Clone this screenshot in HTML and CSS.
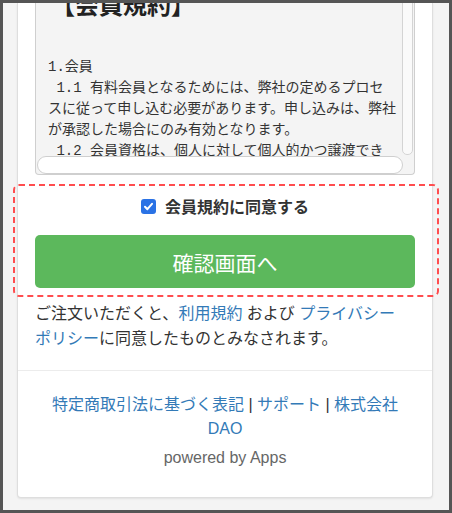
FILE: index.html
```html
<!DOCTYPE html>
<html lang="ja">
<head>
    <meta charset="UTF-8">
    <meta name="viewport" content="width=device-width, initial-scale=1.0">
    <title>会員規約</title>
    <link rel="stylesheet" href="styles.css">
</head>
<body>
    <div class="frame">
        <div class="card">
            <!-- terms box, scrolled to the top -->
            <div class="terms-box">
                <div class="terms-body">
                    <div class="terms-title">【会員規約】</div>
                    <div class="terms-text">1.会員
 1.1 有料会員となるためには、弊社の定めるプロセ
スに従って申し込む必要があります。申し込みは、弊社
が承認した場合にのみ有効となります。
 1.2 会員資格は、個人に対して個人的かつ譲渡でき</div>
                </div>
                <span class="scroll-v"></span>
                <span class="scroll-h"></span>
            </div>

            <div class="agree-area">
                <label class="agree">
                    <span class="check">
                        <svg width="11" height="11" viewBox="0 0 11 11"><path d="M2 5.8 L4.4 8.2 L9 2.8" fill="none" stroke="#fff" stroke-width="2" stroke-linecap="round" stroke-linejoin="round"/></svg>
                    </span>
                    会員規約に同意する
                </label>
                <button class="btn-confirm">確認画面へ</button>
            </div>

            <p class="notice">ご注文いただくと、<a href="#">利用規約</a> および <a href="#">プライバシーポリシー</a>に同意したものとみなされます。</p>

            <div class="footer">
                <div class="footer-links">
                    <a href="#">特定商取引法に基づく表記</a> | <a href="#">サポート</a> | <a href="#">株式会社DAO</a>
                </div>
                <div class="powered">powered by Apps</div>
            </div>
        </div>
    </div>
</body>
</html>
```

FILE: styles.css
```css
/* Global styles */
body {
    margin: 0;
    font-family: 'Liberation Sans', 'Noto Sans CJK JP', sans-serif;
    color: #333;
}
.frame {
    height: 513px;
    box-sizing: border-box;
    border: 3px solid #555;
    background: #f4f4f4;
    padding: 0 14px;
    overflow: hidden;
}
.card {
    width: 416px;
    box-sizing: border-box;
    background: #fff;
    border: 1px solid #dedede;
    border-top: none;
    border-radius: 0 0 4px 4px;
    padding: 0 17px 27px;
    box-shadow: 0 1px 2px rgba(0, 0, 0, 0.08);
}
a {
    color: #337ab7;
    text-decoration: none;
}
/* Terms box */
.terms-box {
    position: relative;
    height: 171px;
    background: #f4f4f4;
    border: 1px solid #cfcfcf;
    border-top: none;
    border-radius: 0 0 4px 4px;
    overflow: hidden;
}
.terms-body {
    padding: 0 12px;
    margin-top: -16px;
    font-family: 'Liberation Mono', 'Noto Sans CJK JP', monospace;
}
.terms-title {
    font-family: 'Noto Sans CJK JP', sans-serif;
    font-size: 24px;
    font-weight: bold;
    line-height: 34px;
    margin: 0 0 36px 3px;
    color: #222;
}
.terms-text {
    font-size: 14px;
    line-height: 21px;
    white-space: pre;
    color: #333;
}
.scroll-v {
    position: absolute;
    top: -6px;
    right: 1px;
    width: 9px;
    height: 156px;
    background: #fafafa;
    border: 1px solid #d4d4d4;
    border-radius: 5px;
}
.scroll-h {
    position: absolute;
    left: 1px;
    bottom: 0;
    width: 364px;
    height: 16px;
    background: #fff;
    border: 1px solid #cfcfcf;
    border-radius: 9px;
}
/* Agreement area */
.agree-area {
    margin: 9px -24px 0 -22px;
    padding: 8px 22px 7px 20px;
    border: 2px dashed #ff4d4f;
    border-radius: 6px;
}
.agree {
    display: flex;
    justify-content: center;
    align-items: center;
    gap: 9px;
    height: 24px;
    font-family: 'Noto Sans CJK JP', sans-serif;
    font-size: 16px;
    font-weight: bold;
    color: #333;
}
.check {
    width: 15px;
    height: 15px;
    border-radius: 3px;
    background: #2a72e5;
    display: flex;
    align-items: center;
    justify-content: center;
}
.btn-confirm {
    display: block;
    width: 100%;
    height: 53px;
    margin-top: 17px;
    border: none;
    border-radius: 5px;
    background: #5cb85c;
    color: #fff;
    font-family: 'Noto Sans CJK JP', sans-serif;
    font-size: 21px;
    cursor: pointer;
}
/* Notice */
.notice {
    margin: 4px 0 0;
    padding: 0 8px 19px 0;
    font-size: 16px;
    line-height: 25px;
}
/* Footer */
.footer {
    margin: 0 -17px;
    padding: 22px 17px 0;
    border-top: 1px solid #ececec;
    text-align: center;
    font-size: 16px;
    line-height: 24px;
}
.powered {
    margin-top: 5px;
    color: #666;
}
```
